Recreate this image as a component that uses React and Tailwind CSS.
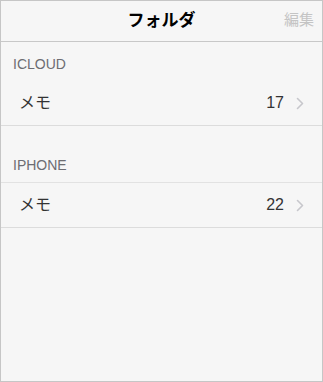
import React from 'react';

const folders = [
    { section: 'ICLOUD', name: 'メモ', count: 17 },
    { section: 'IPHONE', name: 'メモ', count: 22 },
];

const Chevron = () => (
    <svg width="8" height="13" viewBox="0 0 8 13" fill="none" className="ml-[12px]">
        <path d="M1.5 1.5 L6.5 6.5 L1.5 11.5" stroke="#c7c7cc" strokeWidth="1.6" strokeLinecap="round" strokeLinejoin="round" />
    </svg>
);

export default function App() {
    return (
        <div
            className="w-[323px] h-[382px] border border-[#c6c6c6] bg-[#f6f6f6] flex flex-col overflow-hidden"
            style={{ fontFamily: '"Liberation Sans", "Noto Sans CJK JP", sans-serif' }}
        >
            {/* Nav bar */}
            <div className="relative h-[41px] shrink-0 border-b border-[#c8c8c8] flex items-center justify-center">
                <span className="text-[17px] font-bold text-black leading-none -mt-[1px]">フォルダ</span>
                <span className="absolute right-[8px] top-[11px] text-[15px] text-[#c4c4c4] leading-none">編集</span>
            </div>

            {folders.map((f, i) => (
                <div key={f.section} className="flex flex-col">
                    <div className={`${i === 0 ? 'h-[39px]' : 'h-[57px] border-b border-[#e2e2e2]'} flex items-end pl-[12px] pb-[10px]`}>
                        <span className="text-[14px] text-[#6d6d72] leading-none">{f.section}</span>
                    </div>
                    <div className="h-[45px] border-b border-[#dcdcdc] flex items-center pl-[18px] pr-[18px]">
                        <span className="text-[16px] text-[#333]">{f.name}</span>
                        <span className="ml-auto text-[16px] text-[#333]">{f.count}</span>
                        <Chevron />
                    </div>
                </div>
            ))}
        </div>
    );
}
